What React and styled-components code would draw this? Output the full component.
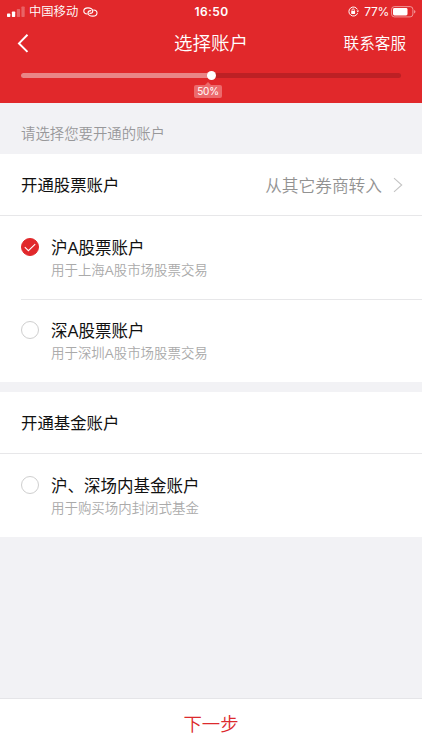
import React, { useState } from "react";
import styled, { createGlobalStyle } from "styled-components";

const GlobalStyle = createGlobalStyle`
  * {
    box-sizing: border-box;
  }
  body {
    margin: 0;
    background-color: #f2f2f5;
    font-family: Inter, "Noto Sans CJK SC", sans-serif;
  }
`

const Screen = styled.div`
  display: flex;
  flex-direction: column;
  width: 100%;
  height: 100vh;
  overflow: hidden;
  color: #111;
  font-family: "Liberation Sans", "Noto Sans CJK SC", sans-serif;
`

const Header = styled.header`
  flex: none;
  height: 103px;
  background-color: #e1282b;
  color: #fff;
`

const StatusBar = styled.div`
  display: grid;
  grid-template-columns: 1fr auto 1fr;
  align-items: center;
  height: 22px;
  padding: 0 6px 0 7px;
  font-family: Inter, "Noto Sans CJK SC", sans-serif;
  font-size: 12px;
  line-height: 22px;
`

const StatusGroup = styled.div`
  display: flex;
  align-items: center;
  justify-content: ${props => props.$end ? "flex-end" : "flex-start"};
`

const Carrier = styled.span`
  margin: 1px 5px 0 2px;
  font-size: 12.3px;
  font-weight: 350;
`

const Clock = styled.span`
  font-size: 12px;
  font-weight: 600;
  letter-spacing: 0.4px;
`

const Percent = styled.span`
  margin: 0 2px 0 5px;
  font-size: 12px;
  letter-spacing: -0.3px;
`

const NavBar = styled.div`
  display: grid;
  grid-template-columns: 1fr auto 1fr;
  align-items: center;
  height: 42px;
  padding: 0 16px 0 17px;
`

const IconButton = styled.button`
  display: flex;
  justify-self: start;
  padding: 0;
  border: 0;
  background: none;
  color: inherit;
`

const Title = styled.h1`
  margin: 0 1px 0 0;
  padding-top: 2px;
  font-size: 18.5px;
  font-weight: 350;
  line-height: 40px;
`

const Service = styled.span`
  justify-self: end;
  margin-top: -2px;
  font-size: 15.6px;
  font-weight: 350;
`

const Progress = styled.div`
  padding: 9px 21px 0;
`

const Track = styled.div`
  position: relative;
  height: 5px;
  border-radius: 3px;
  background-color: #bd2024;
`

const Fill = styled.div`
  height: 5px;
  border-radius: 3px;
  background-color: #ea8586;
`

const Knob = styled.div`
  position: absolute;
  top: -2px;
  width: 9px;
  height: 9px;
  margin-left: -4.5px;
  border-radius: 50%;
  background-color: #fff;
`

const Bubble = styled.div`
  position: absolute;
  top: 12px;
  width: 28px;
  height: 13px;
  margin-left: -17px;
  border-radius: 2px;
  background-color: #ec6a6c;
  font-family: Inter, sans-serif;
  font-size: 10px;
  letter-spacing: -0.3px;
  line-height: 13px;
  text-align: center;

  &::before {
    content: "";
    position: absolute;
    top: -3px;
    left: 11px;
    border: solid transparent;
    border-width: 0 3px 3px;
    border-bottom-color: #ec6a6c;
  }
`

const Content = styled.main`
  flex: 1;
`

const Hint = styled.p`
  height: 51px;
  margin: 0;
  padding: 6px 21px 0;
  color: #98989a;
  font-size: 14.4px;
  font-weight: 350;
  line-height: 51px;
`

const Section = styled.section`
  margin-bottom: 10px;
  background-color: #fff;
`

const SectionHead = styled.div`
  display: flex;
  align-items: center;
  justify-content: space-between;
  height: 62px;
  padding: 0 19px 0 21px;
  border-bottom: 1px solid #e7e7e9;
`

const SectionTitle = styled.h2`
  margin: 0 0 1px;
  font-size: 16.4px;
  font-weight: 400;
`

const Transfer = styled.span`
  display: flex;
  align-items: center;
  gap: 11px;
  color: #929292;
  font-size: 16.7px;
  font-weight: 350;
`

const Option = styled.div`
  display: flex;
  height: 83px;
  margin-left: 21px;
  padding-top: 19px;
  cursor: pointer;

  & + & {
    padding-top: 18px;
    border-top: 1px solid #e7e7e9;
  }
`

const Radio = styled.span`
  display: flex;
  flex: none;
  align-items: center;
  justify-content: center;
  width: 18px;
  height: 18px;
  margin: 3px 12px 0 0;
  border: 1px solid ${props => props.$checked ? "#e1282b" : "#cfcfcf"};
  border-radius: 50%;
  background-color: ${props => props.$checked ? "#e1282b" : "#fff"};
`

const OptionName = styled.div`
  padding-top: 1px;
  font-size: 16.5px;
  line-height: 24px;
`

const OptionNote = styled.div`
  padding-top: 1px;
  color: #aaa;
  font-size: 13.45px;
  font-weight: 350;
  line-height: 20px;
`

const NextButton = styled.button`
  flex: none;
  height: 52px;
  padding: 0 0 4px;
  border: 0;
  border-top: 1px solid #e5e5e8;
  background-color: #fff;
  color: #dc2a2d;
  font-family: inherit;
  font-size: 18.4px;
  font-weight: 350;
`

const SignalIcon = () => (
  <svg width="20" height="12" viewBox="0 0 20 12" fill="#fff">
    <rect x="0" y="7.5" width="3.3" height="3.5" rx="0.7" />
    <rect x="4.9" y="5.5" width="3.3" height="5.5" rx="0.7" />
    <rect x="9.8" y="3" width="3.3" height="8" rx="0.7" opacity="0.28" />
    <rect x="14.4" y="0.5" width="3.3" height="10.5" rx="0.7" opacity="0.28" />
  </svg>
)

const HotspotIcon = () => (
  <svg width="15" height="10" viewBox="0 0 15 10" fill="none" stroke="#fff" strokeWidth="1.1" strokeLinecap="round">
    <path d="M4.2 7C2.2 6.9.8 5.6.8 4 .8 2.2 2.6.9 5 .9c2.6 0 4.8 1.4 4.8 3.1 0 1.5-1.3 2.4-2.9 2.4" />
    <path d="M10.6 3c2 .1 3.4 1.3 3.4 3 0 1.8-1.8 3.1-4.2 3.1C7.2 9.1 5 7.7 5 6c0-1.5 1.3-2.4 2.9-2.4" />
  </svg>
)

const RotationLockIcon = () => (
  <svg width="11" height="11" viewBox="0 0 11 11" fill="none" stroke="#fff">
    <path d="M9.4 3.4A4.5 4.5 0 1 0 9.6 7.2" />
    <path d="M8.5 4.6h2.5L9.8 6.6z" fill="#fff" stroke="none" />
    <rect x="3.2" y="4.9" width="3.9" height="3" rx="0.4" fill="#fff" stroke="none" />
    <path d="M4 5V4a1.15 1.15 0 0 1 2.3 0v1" strokeWidth="0.8" />
  </svg>
)

const BatteryIcon = () => (
  <svg width="25" height="12" viewBox="0 0 25 12">
    <rect x="0.6" y="0.6" width="21.3" height="10.3" rx="2.8" fill="none" stroke="#fff" opacity="0.5" />
    <rect x="2" y="2" width="14.5" height="7.5" rx="1.4" fill="#fff" />
    <path d="M23.2 4v3.6q1.2-.5 1.2-1.8T23.2 4z" fill="#fff" opacity="0.6" />
  </svg>
)

const BackIcon = () => (
  <svg width="12" height="20" viewBox="0 0 12 20" fill="none" stroke="#fff" strokeWidth="2">
    <path d="M10.5 1.8 2 10.4l8.5 8.5" />
  </svg>
)

const ArrowIcon = () => (
  <svg width="10" height="16" viewBox="0 0 10 16" fill="none" stroke="#c4c4c4" strokeWidth="1.1">
    <path d="M1 1.2 8.7 8 1 14.8" />
  </svg>
)

const CheckIcon = () => (
  <svg width="12" height="9" viewBox="0 0 12 9" fill="none" stroke="#fff" strokeWidth="1.1">
    <path d="M.8 4.2 4.4 7.7 11.2 1.2" />
  </svg>
)

const sections = [
  {
    title: "开通股票账户",
    link: "从其它券商转入",
    options: [
      { id: "sh", name: "沪A股票账户", note: "用于上海A股市场股票交易" },
      { id: "sz", name: "深A股票账户", note: "用于深圳A股市场股票交易" }
    ]
  },
  {
    title: "开通基金账户",
    options: [
      { id: "fund", name: "沪、深场内基金账户", note: "用于购买场内封闭式基金" }
    ]
  }
]

const AccountOption = props => (
  <Option onClick={props.onToggle}>
    <Radio $checked={props.checked}>{props.checked && <CheckIcon />}</Radio>
    <div>
      <OptionName>{props.name}</OptionName>
      <OptionNote>{props.note}</OptionNote>
    </div>
  </Option>
)

const App = () => {
  const [selected, setSelected] = useState(["sh"])
  const percent = 50

  const toggle = id => {
    setSelected(selected.includes(id) ? selected.filter(s => s !== id) : [...selected, id])
  }

  return (
    <Screen>
      <GlobalStyle />
      <Header>
        <StatusBar>
          <StatusGroup>
            <SignalIcon />
            <Carrier>中国移动</Carrier>
            <HotspotIcon />
          </StatusGroup>
          <Clock>16:50</Clock>
          <StatusGroup $end>
            <RotationLockIcon />
            <Percent>77%</Percent>
            <BatteryIcon />
          </StatusGroup>
        </StatusBar>
        <NavBar>
          <IconButton aria-label="返回"><BackIcon /></IconButton>
          <Title>选择账户</Title>
          <Service>联系客服</Service>
        </NavBar>
        <Progress>
          <Track>
            <Fill style={{ width: `${percent}%` }} />
            <Knob style={{ left: `${percent}%` }} />
            <Bubble style={{ left: `${percent}%` }}>{percent}%</Bubble>
          </Track>
        </Progress>
      </Header>
      <Content>
        <Hint>请选择您要开通的账户</Hint>
        {sections.map(section => (
          <Section key={section.title}>
            <SectionHead>
              <SectionTitle>{section.title}</SectionTitle>
              {section.link && <Transfer>{section.link}<ArrowIcon /></Transfer>}
            </SectionHead>
            {section.options.map(option => (
              <AccountOption
                key={option.id}
                name={option.name}
                note={option.note}
                checked={selected.includes(option.id)}
                onToggle={() => toggle(option.id)}
              />
            ))}
          </Section>
        ))}
      </Content>
      <NextButton>下一步</NextButton>
    </Screen>
  )
}

export default App;
